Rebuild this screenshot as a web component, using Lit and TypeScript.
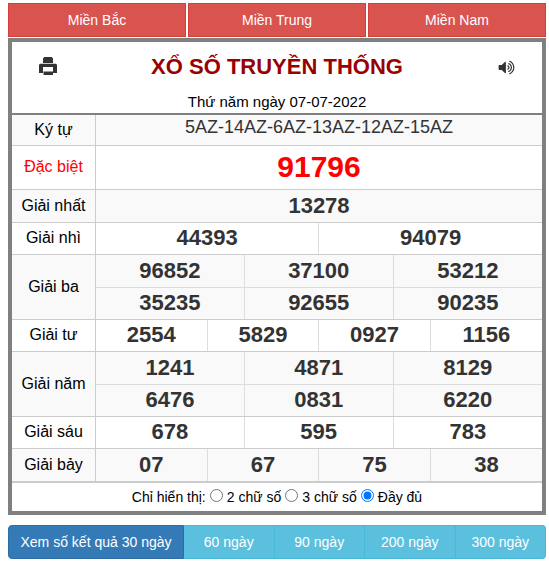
import { LitElement, html, css } from "lit";
import { customElement } from "lit/decorators.js";

type Row = { label: string; rows: string[][]; tall: boolean[]; cls?: string };

const DATA: Row[] = [
  { label: "Giải nhất", rows: [["13278"]], tall: [true], cls: "odd" },
  { label: "Giải nhì", rows: [["44393", "94079"]], tall: [false] },
  { label: "Giải ba", rows: [["96852", "37100", "53212"], ["35235", "92655", "90235"]], tall: [true, false], cls: "odd" },
  { label: "Giải tư", rows: [["2554", "5829", "0927", "1156"]], tall: [false] },
  { label: "Giải năm", rows: [["1241", "4871", "8129"], ["6476", "0831", "6220"]], tall: [true, false], cls: "odd" },
  { label: "Giải sáu", rows: [["678", "595", "783"]], tall: [false] },
  { label: "Giải bảy", rows: [["07", "67", "75", "38"]], tall: [true], cls: "odd" },
];

@customElement("app-root")
export class AppRoot extends LitElement {
  static styles = css`
    :host { display: block; width: 549px; height: 568px; font-family: "Liberation Sans", Arial, sans-serif; color: #000; box-sizing: border-box; padding: 3px 3px 0 8px; overflow: hidden; }
    * { box-sizing: border-box; }
    .nav { display: grid; grid-template-columns: 178px 178px 178px; gap: 2px; width: 538px; }
    .nav a { height: 34px; background: #d9534f; border: 1px solid #d43f3a; color: #fff; font-size: 14px; display: flex; align-items: center; justify-content: center; }
    .box { width: 538px; margin-top: 1px; border: 4px solid #808080; background: #fff; }
    .head { height: 48px; display: grid; grid-template-columns: 72px 1fr 72px; align-items: center; }
    .head svg { display: block; }
    .ic { display: flex; justify-content: center; }
    .ic.r { padding-top: 2px; }
    h1 { margin: 0; padding-top: 1px; font-size: 22px; line-height: 26px; font-weight: bold; color: #990000; text-align: center; white-space: nowrap; }
    .date { height: 25px; font-size: 15px; text-align: center; color: #000; display: flex; align-items: center; justify-content: center; padding-bottom: 1px; border-bottom: 2px solid #808080; }
    table { width: 530px; table-layout: fixed; border-collapse: collapse; }
    col.lab { width: 83.5px; }
    td { border: 1px solid #ccc; text-align: center; padding: 0; overflow: hidden; }
    tr > td:first-child { border-left: 0; }
    tr > td:last-child { border-right: 0; }
    tr:first-child td { border-top: 0; }
    .odd td { background: #f9f9f9; }
    .label { font-size: 16px; color: #000; }
    .num { font-size: 22px; font-weight: bold; color: #333; height: 32px; line-height: 24px; border-color: #ddd; border-bottom-color: #ccc; }
    .tall .num { height: 33px; }
    .num.inner { border-bottom-color: #ddd; }
    .code { font-size: 18px; color: #333; height: 30px; vertical-align: top; line-height: 24px; }
    .lab-code { height: 30px; }
    .sp { height: 44px; font-size: 30px; font-weight: bold; color: #f00; line-height: 32px; }
    .red { color: #f00; }
    .opts { height: 29px; font-size: 14px; display: flex; align-items: center; justify-content: center; color: #000; border-top: 1px solid #ccc; }
    .opts input { margin: 0 4px; width: 13px; height: 13px; position: relative; top: -1px; }
    .btns { display: grid; grid-template-columns: 176px 90.5px 90.5px 90.5px 90.5px; width: 538px; margin-top: 10px; height: 34px; }
    .btns a { display: flex; align-items: center; justify-content: center; color: #fff; font-size: 14px; background: #5bc0de; border: 1px solid #46b8da; border-left-width: 0; white-space: nowrap; }
    .btns a.first { background: #337ab7; border: 1px solid #2e6da4; border-radius: 4px 0 0 4px; }
    .btns a.last { border-radius: 0 4px 4px 0; }
  `;

  render() {
    return html`
      <div class="nav"><a>Miền Bắc</a><a>Miền Trung</a><a>Miền Nam</a></div>
      <div class="box">
        <div class="head">
          <div class="ic">
            <svg width="18" height="18" viewBox="0 0 18 18" fill="#333">
              <path d="M5.200 0h7.600l1.200 1.500V6H4V1.500z" />
              <path d="M1.500 6.700h15a1.500 1.500 0 0 1 1.500 1.500V16h-4v-6H4v6H0V8.200a1.500 1.500 0 0 1 1.500-1.500z" />
              <path d="M4.500 14.500h9.500V18H4.500z" />
            </svg>
          </div>
          <h1>XỔ SỐ TRUYỀN THỐNG</h1>
          <div class="ic r">
            <svg width="17" height="17" viewBox="0 0 1792 1792" fill="#333"><path d="M832 352v1088q0 26-19 45t-45 19-45-19l-333-333h-262q-26 0-45-19t-19-45v-384q0-26 19-45t45-19h262l333-333q19-19 45-19t45 19 19 45zm384 544q0 76-42.500 141.500t-112.500 93.500q-10 5-25 5-26 0-45-18.500t-19-45.500q0-21 12-35.500t29-25 34-23 29-36 12-56.500-12-56.500-29-36-34-23-29-25-12-35.500q0-27 19-45.500t45-18.500q15 0 25 5 70 27 112.500 93t42.500 142zm256 0q0 153-85 282.500t-225 188.500q-13 5-25 5-27 0-46-19t-19-45q0-39 39-59 56-29 76-44 74-54 115.500-135.500t41.500-173.500-41.500-173.500-115.500-135.500q-20-15-76-44-39-20-39-59 0-26 19-45t45-19q13 0 26 5 140 59 225 188.500t85 282.500zm256 0q0 230-127 422.500t-338 283.500q-13 5-26 5-26 0-45-19t-19-45q0-36 39-59 7-4 22.500-10.500t22.500-10.500q46-25 82-51 123-91 192-227t69-289-69-289-192-227q-36-26-82-51-7-4-22.500-10.500t-22.500-10.500q-39-23-39-59 0-26 19-45t45-19q13 0 26 5 211 91 338 283.500t127 422.500z"/></svg>
          </div>
        </div>
        <div class="date">Thứ năm ngày 07-07-2022</div>
        <table>
          <colgroup><col class="lab" />${Array.from({ length: 12 }, () => html`<col />`)}</colgroup>
          <tr class="odd"><td class="label lab-code">Ký tự</td><td class="code" colspan="12">5AZ-14AZ-6AZ-13AZ-12AZ-15AZ</td></tr>
          <tr><td class="label red">Đặc biệt</td><td class="sp" colspan="12">91796</td></tr>
          ${DATA.map((d) =>
            d.rows.map(
              (r, i) => html`<tr class="${d.cls ?? ""} ${d.tall[i] ? "tall" : ""}">
                ${i === 0 ? html`<td class="label" rowspan=${d.rows.length}>${d.label}</td>` : ""}
                ${r.map((n) => html`<td class="num ${i < d.rows.length - 1 ? "inner" : ""}" colspan=${12 / r.length}>${n}</td>`)}
              </tr>`
            )
          )}
        </table>
        <div class="opts">
          <span>Chỉ hiển thị:</span>
          <input type="radio" name="o" /><span>2 chữ số</span>
          <input type="radio" name="o" /><span>3 chữ số</span>
          <input type="radio" name="o" checked /><span>Đầy đủ</span>
        </div>
      </div>
      <div class="btns">
        <a class="first">Xem số kết quả 30 ngày</a><a>60 ngày</a><a>90 ngày</a><a>200 ngày</a><a class="last">300 ngày</a>
      </div>
    `;
  }
}
